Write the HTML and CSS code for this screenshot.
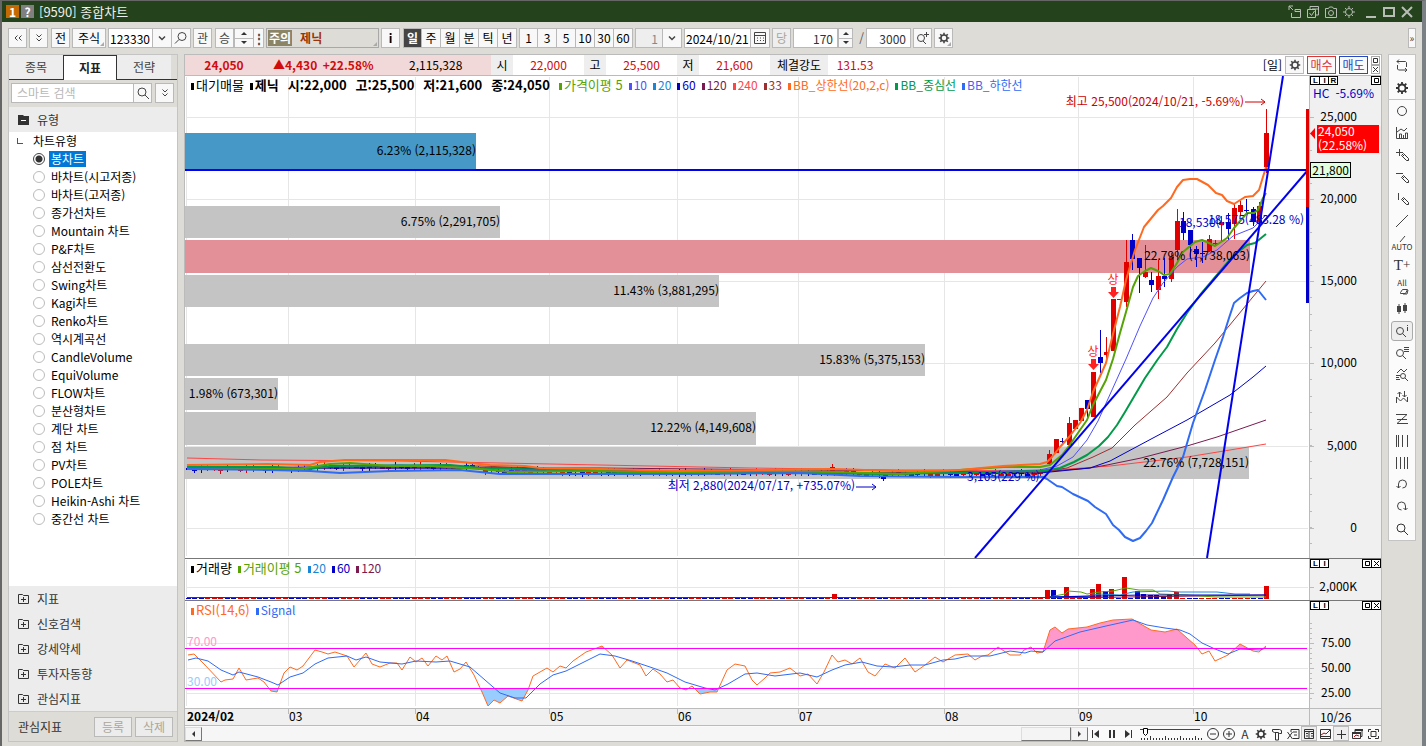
FILE: index.html
```html
<!DOCTYPE html>
<html lang="ko">

<head>
    <meta charset="UTF-8">
    <meta name="viewport" content="width=device-width, initial-scale=1.0">
    <title>[9590] 종합차트</title>
    <link rel="stylesheet" href="styles.css">
</head>

<body>
    <!-- 공용 아이콘 -->
    <svg class="defs" width="0" height="0">
        <symbol id="gear" viewBox="0 0 16 16">
            <circle cx="8" cy="8" r="3.5" fill="none" stroke="currentColor" stroke-width="1.8" />
            <path d="M8 2v2.500M8 11.500V14M2 8h2.500M11.500 8H14M3.700 3.700l1.800 1.800M10.500 10.500l1.800 1.800M3.700 12.300l1.800-1.800M10.500 5.500l1.800-1.800" fill="none" stroke="currentColor" stroke-width="1.8" />
        </symbol>
        <symbol id="search" viewBox="0 0 16 16">
            <circle cx="7" cy="7" r="4" fill="none" stroke="currentColor" />
            <path d="M10 10l4 4" stroke="currentColor" />
        </symbol>
        <symbol id="lens" viewBox="0 0 16 16">
            <circle cx="9" cy="6.500" r="4" fill="none" stroke="currentColor" />
            <path d="M6 9.500L2 13.500" stroke="currentColor" />
        </symbol>
        <symbol id="dbl-down" viewBox="0 0 16 16">
            <path d="M5.500 4.500L8 7l2.500-2.500M5.500 8.500L8 11l2.500-2.500" fill="none" stroke="currentColor" />
        </symbol>
        <symbol id="dbl-left" viewBox="0 0 16 16">
            <path d="M7.500 5.500L5 8l2.500 2.500M11.500 5.500L9 8l2.500 2.500" fill="none" stroke="currentColor" />
        </symbol>
        <symbol id="down" viewBox="0 0 16 16">
            <path d="M5 6.500l3 3 3-3" fill="none" stroke="currentColor" stroke-width="1.500" />
        </symbol>
        <symbol id="pen" viewBox="0 0 16 16">
            <path d="M7.500 8.500l2-2 5 5v2h-2zM8.500 9.500l2-2" fill="none" stroke="currentColor" />
        </symbol>
        <symbol id="plus-box" viewBox="0 0 12 12">
            <path d="M.5 1.500h4l1 1h5v8H.5zM3 6.500h5M5.500 4v5" fill="none" stroke="currentColor" />
        </symbol>
        <symbol id="box" viewBox="0 0 7 7">
            <path d="M1.500 1.500h4v4h-4z" fill="none" stroke="currentColor" />
        </symbol>
        <symbol id="cross" viewBox="0 0 7 7">
            <path d="M1 1l5 5M6 1L1 6" fill="none" stroke="currentColor" />
        </symbol>
    </svg>

    <div class="window">
        <header class="title-bar">
            <span class="badge orange">1</span>
            <span class="badge gray">?</span>
            <h1>[9590] 종합차트</h1>
            <div class="window-buttons">
                <button aria-label="이동"><svg width="14" height="14" viewBox="0 0 14 14"><path d="M1 5V1h4M1 1l4 4M3.500 8v4.500h9v-8H7M7 4.500v2h5" /></svg></button>
                <button aria-label="복사"><svg width="14" height="14" viewBox="0 0 14 14"><path d="M1.500 4.500h8v8h-8zM4 4V1.500h8.500V10H10M3.500 8l2 2.500L8.500 6M6 4h6" /></svg></button>
                <button aria-label="캡처"><svg width="14" height="14" viewBox="0 0 14 14"><path d="M1.500 3.500h3l1-1.500h3l1 1.500h3v9h-11z" /><circle cx="7" cy="8" r="2.500" /></svg></button>
                <button aria-label="설정"><svg width="14" height="14" viewBox="0 0 14 14"><circle cx="7" cy="7" r="3.500" /><path d="M7 1v2.500M7 10.500V13M1 7h2.500M10.500 7H13M3 3l1.500 1.500M9.500 9.500L11 11M3 11l1.500-1.500M9.500 4.500L11 3" /></svg></button>
                <button class="wide" aria-label="최소화"><svg width="14" height="14" viewBox="0 0 14 14"><path class="thick" d="M2 12h10" /></svg></button>
                <button class="wide" aria-label="최대화"><svg width="14" height="14" viewBox="0 0 14 14"><path class="thick" d="M2 3h10v8H2z" /></svg></button>
                <button class="wide" aria-label="닫기"><svg width="14" height="14" viewBox="0 0 14 14"><path class="thick" d="M2 2l10 10M12 2L2 12" /></svg></button>
            </div>
        </header>

        <div class="toolbar">
            <button class="tb"><svg width="16" height="16"><use href="#dbl-left" /></svg></button>
            <button class="tb"><svg width="16" height="16"><use href="#dbl-down" /></svg></button>
            <button class="tb dark space-s">전</button>
            <button class="tb dark stock corner">주식</button>
            <div class="group">
                <input class="code" type="text" value="123330" aria-label="종목코드">
                <button class="tb"><svg width="16" height="16"><use href="#down" /></svg></button>
                <button class="tb"><svg width="16" height="16"><use href="#lens" /></svg></button>
            </div>
            <button class="tb">관</button>
            <div class="group space-s">
                <button class="tb">승</button>
                <div class="spin"><button aria-label="위"></button><button aria-label="아래"></button></div>
                <button class="tb dots">⋮</button>
            </div>
            <div class="stock-name corner"><span>주의</span><b>제닉</b></div>
            <button class="tb dark info"><b>i</b></button>
            <div class="group dark space-s">
                <button class="tb on">일</button><button class="tb">주</button><button class="tb">월</button><button class="tb">분</button><button class="tb">틱</button><button class="tb">년</button>
            </div>
            <div class="group dark">
                <button class="tb">1</button><button class="tb">3</button><button class="tb">5</button><button class="tb">10</button><button class="tb">30</button><button class="tb">60</button>
            </div>
            <div class="group">
                <input class="count off" type="text" value="1" aria-label="분 단위" disabled>
                <button class="tb"><svg width="16" height="16"><use href="#down" /></svg></button>
            </div>
            <div class="group">
                <input class="date" type="text" value="2024/10/21" aria-label="기준일">
                <button class="tb"><svg width="16" height="16" viewBox="0 0 16 16"><path d="M2.500 2.500h11v11h-11zM3 5.500h10M5 8h1M8 8h1M11 8h1M5 10.500h1M8 10.500h1M11 10.500h1" fill="none" stroke="#444" /></svg></button>
            </div>
            <button class="tb off">당</button>
            <div class="group">
                <input class="count" type="text" value="170" aria-label="표시 개수">
                <div class="spin narrow"><button aria-label="증가"></button><button aria-label="감소"></button></div>
            </div>
            <span class="slash">/</span>
            <input class="count" type="text" value="3000" aria-label="전체 개수">
            <button class="tb"><svg width="16" height="16" viewBox="0 0 16 16"><circle cx="6" cy="8" r="3.500" fill="none" stroke="#444" /><path d="M8 11l3 3M9 4.500h5M11.500 2v5" stroke="#444" /></svg></button>
            <button class="tb corner"><svg width="14" height="14"><use href="#gear" /></svg></button>
            <button class="tb more">»</button>
        </div>

        <main class="content">
            <aside class="sidebar">
                <nav class="tabs">
                    <button>종목</button><button class="active">지표</button><button>전략</button>
                </nav>
                <div class="search-row">
                    <input type="text" placeholder="스마트 검색" aria-label="스마트 검색">
                    <button class="tb"><svg width="16" height="16"><use href="#search" /></svg></button>
                    <button class="tb last"><svg width="16" height="16"><use href="#dbl-down" /></svg></button>
                </div>
                <div class="lists">
                    <h2 class="fold"><svg width="12" height="12" viewBox="0 0 12 12"><path d="M0 1h5l1 1h5v9H0z" fill="#333" /><path d="M3 6.500h5" stroke="#fff" /></svg>유형</h2>
                    <div class="tree">
                        <p>차트유형</p>
                        <label><input type="radio" name="type" checked><span>봉차트</span></label>
                        <label><input type="radio" name="type"><span>바차트(시고저종)</span></label>
                        <label><input type="radio" name="type"><span>바차트(고저종)</span></label>
                        <label><input type="radio" name="type"><span>종가선차트</span></label>
                        <label><input type="radio" name="type"><span>Mountain 차트</span></label>
                        <label><input type="radio" name="type"><span>P&amp;F차트</span></label>
                        <label><input type="radio" name="type"><span>삼선전환도</span></label>
                        <label><input type="radio" name="type"><span>Swing차트</span></label>
                        <label><input type="radio" name="type"><span>Kagi차트</span></label>
                        <label><input type="radio" name="type"><span>Renko차트</span></label>
                        <label><input type="radio" name="type"><span>역시계곡선</span></label>
                        <label><input type="radio" name="type"><span>CandleVolume</span></label>
                        <label><input type="radio" name="type"><span>EquiVolume</span></label>
                        <label><input type="radio" name="type"><span>FLOW차트</span></label>
                        <label><input type="radio" name="type"><span>분산형차트</span></label>
                        <label><input type="radio" name="type"><span>계단 차트</span></label>
                        <label><input type="radio" name="type"><span>점 차트</span></label>
                        <label><input type="radio" name="type"><span>PV차트</span></label>
                        <label><input type="radio" name="type"><span>POLE차트</span></label>
                        <label><input type="radio" name="type"><span>Heikin-Ashi 차트</span></label>
                        <label><input type="radio" name="type"><span>중간선 차트</span></label>
                    </div>
                    <h2 class="fold"><svg width="12" height="12"><use href="#plus-box" /></svg>지표</h2>
                    <h2 class="fold"><svg width="12" height="12"><use href="#plus-box" /></svg>신호검색</h2>
                    <h2 class="fold"><svg width="12" height="12"><use href="#plus-box" /></svg>강세약세</h2>
                    <h2 class="fold"><svg width="12" height="12"><use href="#plus-box" /></svg>투자자동향</h2>
                    <h2 class="fold"><svg width="12" height="12"><use href="#plus-box" /></svg>관심지표</h2>
                    <div class="fav"><span>관심지표</span><button disabled>등록</button><button disabled>삭제</button></div>
                </div>
            </aside>

            <section class="chart">
                <div class="quote">
                    <div class="now"><b class="price">24,050</b><b class="diff">▲4,430&nbsp; +22.58%</b><span>2,115,328</span></div>
                    <span class="name">시</span><span class="val">22,000</span>
                    <span class="name">고</span><span class="val">25,500</span>
                    <span class="name">저</span><span class="val">21,600</span>
                    <span class="name long">체결강도</span><span class="val">131.53</span>
                    <div class="quote-right">
                        <span>[일]</span>
                        <button class="tb"><svg width="14" height="14"><use href="#gear" /></svg></button>
                        <button class="order buy">매수</button>
                        <button class="order sell">매도</button>
                        <div class="mini">
                            <button aria-label="확장"><svg width="7" height="7"><use href="#box" /></svg></button>
                            <button aria-label="닫기"><svg width="7" height="7"><use href="#cross" /></svg></button>
                        </div>
                    </div>
                </div>

                <div class="pane">
                    <div class="plot">
                        <svg id="price" width="100%" height="482"></svg>
                        <div class="legend">
                            <span class="k ko">대기매물</span><b class="k">제닉</b><b>시:22,000</b><b>고:25,500</b><b>저:21,600</b><b>종:24,050</b>
                            <span class="k ko c5">가격이평 5</span><span class="k c10">10</span><span class="k c20">20</span><span class="k c60">60</span><span class="k c120">120</span><span class="k c240">240</span><span class="k c33">33</span>
                            <span class="k up">BB_상한선(20,2,c)</span><span class="k mid">BB_중심선</span><span class="k low">BB_하한선</span>
                        </div>
                    </div>
                    <div class="axis">
                        <svg id="price-axis" width="100%" height="482"></svg>
                        <div class="pane-buttons">
                            <button>L</button><button>I</button><button>R</button>
                            <button class="right" aria-label="확장"><svg width="7" height="7"><use href="#box" /></svg></button>
                        </div>
                    </div>
                </div>

                <div class="pane">
                    <div class="plot">
                        <svg id="volume" width="100%" height="41"></svg>
                        <div class="legend"><span class="k ko">거래량</span><span class="k ko c5">거래이평 5</span><span class="k c20">20</span><span class="k c60">60</span><span class="k c120">120</span></div>
                    </div>
                    <div class="axis">
                        <svg id="volume-axis" width="100%" height="41"></svg>
                        <div class="pane-buttons">
                            <button>L</button><button>I</button>
                            <button class="right" aria-label="확장"><svg width="7" height="7"><use href="#box" /></svg></button>
                            <button aria-label="닫기"><svg width="7" height="7"><use href="#cross" /></svg></button>
                        </div>
                    </div>
                </div>

                <div class="pane last">
                    <div class="plot">
                        <svg id="rsi" width="100%" height="107"></svg>
                        <div class="legend"><span class="k ko up">RSI(14,6)</span><span class="k low">Signal</span></div>
                    </div>
                    <div class="axis">
                        <svg id="rsi-axis" width="100%" height="107"></svg>
                        <div class="pane-buttons">
                            <button>L</button><button>I</button>
                            <button class="right" aria-label="확장"><svg width="7" height="7"><use href="#box" /></svg></button>
                            <button aria-label="닫기"><svg width="7" height="7"><use href="#cross" /></svg></button>
                        </div>
                    </div>
                </div>

                <div class="dates">
                    <svg id="months" width="100%" height="16"></svg>
                    <span>10/26</span>
                </div>

                <div class="bottom">
                    <button class="scroll" aria-label="왼쪽"><svg width="7" height="8" viewBox="0 0 7 8"><path class="fill" d="M5 1v6L2 4z" /></svg></button>
                    <div class="track"><div class="thumb"></div></div>
                    <button class="scroll" aria-label="오른쪽"><svg width="7" height="8" viewBox="0 0 7 8"><path class="fill" d="M2 1v6l3-3z" /></svg></button>
                    <div class="play">
                        <button aria-label="처음"><svg width="16" height="14" viewBox="0 0 16 14"><path d="M4.500 3v8" /><path class="fill" d="M11 3v8L6 7z" /></svg></button>
                        <button aria-label="일시정지"><svg width="16" height="14" viewBox="0 0 16 14"><path class="bold" d="M6 3v8M10 3v8" /></svg></button>
                        <button aria-label="마지막"><svg width="16" height="14" viewBox="0 0 16 14"><path d="M11.500 3v8" /><path class="fill" d="M5 3v8l5-4z" /></svg></button>
                    </div>
                    <svg id="speed" width="64" height="14"></svg>
                    <div class="tools">
                        <button aria-label="축소"><svg width="16" height="14" viewBox="0 0 16 14"><circle cx="8" cy="7" r="5.500" /><path d="M5 7h6" /></svg></button>
                        <button aria-label="확대"><svg width="16" height="14" viewBox="0 0 16 14"><circle cx="8" cy="7" r="5.500" /><path d="M5 7h6M8 4v6" /></svg></button>
                        <button>A</button>
                        <button aria-label="설정"><svg width="14" height="14"><use href="#gear" /></svg></button>
                        <button aria-label="도구"><svg width="16" height="14" viewBox="0 0 16 14"><path d="M3.500 2.500h7l2 1v3h-2l-1-1h-4l-2-1zM6.500 6v7h3V6" /></svg></button>
                        <button aria-label="엑셀"><svg width="16" height="14" viewBox="0 0 16 14"><path d="M6 5V2.500h8v9H8M8 5h4M9 8h3M2.500 5l5 7M7.500 5l-5 7" /></svg></button>
                        <button class="on" aria-label="정보창"><svg width="16" height="14" viewBox="0 0 16 14"><path d="M3.500 2.500h9v9h-9zM4 4.500h8M8 5v6M5 6.500h2M5 9h2M10 6.500h2M10 9h2" /></svg></button>
                        <button aria-label="차트"><svg width="16" height="14" viewBox="0 0 16 14"><path d="M3.500 2.500h10v9h-10zM4 9.500h9" /><path d="M4 8l3-2 2 1 4-4" stroke="#c00" /></svg></button>
                        <button class="on" aria-label="십자선"><svg width="16" height="14" viewBox="0 0 16 14"><path d="M4 7.500h9M8.500 3v9" /></svg></button>
                        <button aria-label="창 복사"><svg width="16" height="14" viewBox="0 0 16 14"><path d="M3.500 5.500h8v6h-8zM6 5V2.500h7v7h-2" /><path class="bold" d="M3 6h9M6 3h8" /><path d="M5 10l2-2 3 1" stroke="#c00" /></svg></button>
                        <button aria-label="전체화면"><svg width="16" height="14" viewBox="0 0 16 14"><path d="M3.500 5V2.500H6M10 2.500h3.500V5M13.500 9v2.500H10M6 11.500H3.500V9M6 4.500h5v5H6z" /></svg></button>
                    </div>
                </div>
            </section>

            <nav class="rail">
                <button aria-label="새로고침"><svg viewBox="0 0 16 16"><path d="M6 3.500h5.500l1 1V9M5 1.500l-2 2 2 2M3 3.500h3M3.500 7v4l1 1H12M11 10l2 2-2 2" /></svg></button>
                <button aria-label="설정"><svg width="16" height="16"><use href="#gear" /></svg></button>
                <hr>
                <button aria-label="원"><svg viewBox="0 0 16 16"><circle cx="8" cy="8" r="4.500" /></svg></button>
                <button aria-label="지표"><svg viewBox="0 0 16 16"><path d="M2.500 2v11.500H14M3 7l4-3 3 2 3-3M5.500 13V9h2v4M9.500 13v-3M11.500 13V8h2v5" /></svg></button>
                <button aria-label="추가선"><svg viewBox="0 0 16 16"><path d="M2 5.500h7M5.500 2v7" /><use href="#pen" /></svg></button>
                <button aria-label="수평선"><svg viewBox="0 0 16 16"><path d="M2 4.500h7" /><use href="#pen" /></svg></button>
                <button aria-label="수직선"><svg viewBox="0 0 16 16"><path d="M4.500 2v7" /><use href="#pen" /></svg></button>
                <button aria-label="추세선"><svg viewBox="0 0 16 16"><path d="M2 14L14 2" /></svg></button>
                <button class="auto"><svg viewBox="0 0 16 8"><path d="M6 7l5-6" /></svg>AUTO</button>
                <button class="text">T<sup>+</sup></button>
                <button class="all">All<svg viewBox="0 0 16 8"><path d="M6.500 5.500l2-3h5l-2 4h-5zM9 7h4l1-4" /></svg></button>
                <button aria-label="캔들"><svg viewBox="0 0 16 16"><path class="fill" d="M3 5h4v6H3zM9 4h4v6H9z" /><path d="M5 3v10M11 2v10" /></svg></button>
                <button class="on" aria-label="정보"><svg viewBox="0 0 16 16"><circle cx="6" cy="8" r="3.500" /><path d="M8.500 10.500L12 14M13.500 2v1M13.500 4v4" /></svg></button>
                <button aria-label="목록"><svg viewBox="0 0 16 16"><circle cx="6" cy="8" r="3.500" /><path d="M8.500 10.500L12 14M10 2.500h5M10 4.500h5M10 6.500h5" /></svg></button>
                <button aria-label="분석"><svg viewBox="0 0 16 16"><path d="M3 6l4-4 3 3 3-3M2 8.500h4M2 10.500h3M2 12.500h4M11 11l3 3" /><circle cx="9" cy="9" r="2.500" /></svg></button>
                <button aria-label="신호"><svg viewBox="0 0 16 16"><path d="M2.500 14V8l4 4 3-3 4 4V8M5.500 8V3M3.500 5l2-2 2 2M10.500 2v6M8.500 6l2 2 2-2" /></svg></button>
                <button aria-label="피보나치"><svg viewBox="0 0 16 16"><path d="M2 3.500h11L3 12.500h11M3 8.500h10" /></svg></button>
                <button aria-label="시간대"><svg viewBox="0 0 16 16"><path d="M2.500 2v12M4.500 2v12M8.500 2v12M13.500 2v12" /></svg></button>
                <button aria-label="등간격"><svg viewBox="0 0 16 16"><path d="M2.500 2v12M6.500 2v12M10.500 2v12M13.500 2v12" /></svg></button>
                <button aria-label="실행취소"><svg viewBox="0 0 16 16"><path d="M4.500 11V7a4 4 0 1 1 4 4M2.500 9l2 2 2-2" /></svg></button>
                <button aria-label="다시실행"><svg viewBox="0 0 16 16"><path d="M11.500 11V7a4 4 0 1 0-4 4M9.500 9l2 2 2-2" /></svg></button>
                <button aria-label="돋보기"><svg viewBox="0 0 16 16"><use href="#search" /></svg></button>
            </nav>
        </main>
    </div>

    <script src="chart.js"></script>
</body>

</html>
```

FILE: styles.css
```css
* {
    box-sizing: border-box;
}

body {
    margin: 0;
    background: #dddcd7;
    font-family: "Noto Sans CJK KR", "Liberation Sans", sans-serif;
    font-size: 12px;
    line-height: 16px;
    color: #000;
}

button, input {
    font: inherit;
    color: inherit;
    margin: 0;
    padding: 0;
    border: 0;
    background: none;
}

svg {
    display: block;
    flex: none;
}

h1, h2, p, hr {
    margin: 0;
    font-size: 12px;
    font-weight: normal;
}

.defs {
    position: absolute;
}

.window {
    display: flex;
    flex-direction: column;
    min-height: 100vh;
    border-top: 1px solid #666;
    border-left: 2px solid #666;
    border-right: 4px solid #7b8084;
}

/* 제목 표시줄 */
.title-bar {
    display: flex;
    align-items: center;
    gap: 2px;
    height: 21px;
    padding: 0 8px 0 4px;
    background: #24421b;
    color: #eee;
}

.title-bar h1 {
    padding-left: 3px;
    font-size: 13px;
}

.badge {
    width: 13px;
    height: 13px;
    line-height: 13px;
    text-align: center;
    font-weight: bold;
    color: #fff;
}

.orange {
    background: #c36a05;
}

.gray {
    background: #808080;
}

.window-buttons {
    display: flex;
    gap: 4px;
    margin-left: auto;
}

.window-buttons button:nth-child(5) {
    margin-left: 4px;
}

.window-buttons svg {
    fill: none;
    stroke: #b8bdb6;
}

.window-buttons .thick {
    stroke-width: 2;
}

/* 도구 모음 */
.toolbar {
    display: flex;
    align-items: center;
    gap: 2px;
    height: 32px;
    padding-left: 6px;
}

.tb {
    position: relative;
    display: flex;
    align-items: center;
    justify-content: center;
    flex: none;
    width: 19px;
    height: 20px;
    border: 1px solid #b9b9b9;
    background: #f8f8f8;
    color: #444;
}

.group {
    display: flex;
    height: 20px;
}

.group > * + * {
    border-left: 0;
}

.dark, .dark .tb {
    color: #000;
}

.group .tb.on {
    background: #444;
    color: #fff;
    font-weight: bold;
}

.tb.off {
    color: #aaa79a;
    background: #eee;
}

.space-s {
    margin-left: 1px;
}

.stock {
    width: 34px;
}

.corner {
    position: relative;
}

.corner::after {
    content: "";
    position: absolute;
    right: 1px;
    bottom: 1px;
    border-left: 4px solid transparent;
    border-bottom: 4px solid #aaa;
}

.toolbar input {
    height: 20px;
    border: 1px solid #b9b9b9;
    background: #fff;
}

.toolbar .code {
    width: 45px;
    padding: 0 1px;
}

.toolbar .count {
    width: 45px;
    padding-right: 4px;
    text-align: right;
    color: #333;
}

.toolbar .count.off {
    width: 28px;
    background: #eee;
    color: #888;
}

.toolbar .date {
    width: 67px;
    padding: 0 1px;
}

.spin {
    width: 20px;
    display: flex;
    flex-direction: column;
    border: 1px solid #b9b9b9;
    background: #f8f8f8;
}

.spin.narrow {
    width: 15px;
}

.spin button {
    flex: 1;
    display: flex;
    align-items: center;
    justify-content: center;
}

.spin button + button {
    border-top: 1px solid #b9b9b9;
}

.spin button::before {
    content: "";
    border: 3px solid transparent;
    border-top: 0;
    border-bottom: 3px solid #333;
}

.spin button + button::before {
    border-bottom: 0;
    border-top: 3px solid #333;
}

.dots {
    width: 10px;
    font-weight: bold;
}

.stock-name {
    display: flex;
    align-items: center;
    gap: 8px;
    width: 113px;
    height: 20px;
    padding-left: 1px;
    border: 1px solid #a8a8a8;
}

.stock-name span {
    padding: 0 1px;
    background: #8b8566;
    color: #fff;
    font-weight: bold;
}

.stock-name b {
    color: #9c3206;
}

.slash {
    width: 9px;
    text-align: right;
    color: #555;
}

.more {
    margin-left: auto;
    margin-right: 6px;
    width: 8px;
    font-size: 10px;
}

/* 본문 */
.content {
    flex: 1;
    display: flex;
    align-items: stretch;
    gap: 6px;
    padding: 0 6px 5px 6px;
}

.sidebar {
    flex: none;
    width: 170px;
    display: flex;
    flex-direction: column;
    border: 1px solid #c4c4c4;
}

.tabs {
    display: flex;
    height: 25px;
    border-bottom: 1px solid #333;
}

.tabs button {
    width: 54px;
    height: 24px;
    background: #ededed;
    color: #444;
}

.tabs .active {
    height: 25px;
    border: 1px solid #333;
    border-bottom: 0;
    background: #fff;
    font-weight: bold;
    color: #222;
}

.search-row {
    display: flex;
    padding: 3px 2px 4px;
}

.search-row input {
    flex: 1;
    min-width: 0;
    padding: 0 5px;
    border: 1px solid #b9b9b9;
    border-right: 0;
    background: #fff;
}

.search-row input::placeholder {
    color: #b8b8b8;
}

.search-row .last {
    margin-left: 3px;
    margin-right: 1px;
}

.lists {
    flex: 1;
    display: flex;
    flex-direction: column;
}

.fold {
    display: flex;
    align-items: center;
    gap: 7px;
    height: 25px;
    padding-left: 9px;
    background: #ececec;
    color: #333;
}

.tree {
    flex: 1;
    background: #fff;
}

.tree p, .tree label {
    display: flex;
    align-items: center;
    height: 18px;
}

.tree p {
    padding-left: 24px;
    position: relative;
}

.tree p::before {
    content: "";
    position: absolute;
    left: 8px;
    top: 6px;
    width: 5px;
    height: 5px;
    border-left: 1px solid #555;
    border-bottom: 1px solid #555;
}

.tree label {
    padding-left: 24px;
    gap: 4px;
}

.tree span {
    padding: 0 2px;
}

.tree input {
    appearance: none;
    width: 12px;
    height: 12px;
    border: 1px solid #bbb;
    border-radius: 50%;
    background: #fff;
}

.tree input:checked {
    border-color: #444;
    background: radial-gradient(#333 0 3px, #fff 4px);
}

.tree input:checked + span {
    background: #0078d7;
    color: #fff;
}

.fav {
    display: flex;
    align-items: center;
    gap: 3px;
    height: 30px;
    padding: 0 4px 0 9px;
    border-top: 1px solid #ccc;
    color: #333;
}

.fav span {
    margin-right: auto;
}

.fav button {
    width: 38px;
    height: 20px;
    border: 1px solid #b9b9b9;
    background: #ececec;
    color: #aaa79a;
}

/* 차트 */
.chart {
    flex: 1;
    min-width: 0;
    border: 1px solid #bbb;
    background: #fff;
}

.quote {
    display: flex;
    height: 21px;
    line-height: 20px;
    border-bottom: 1px solid #bbb;
}

.now {
    display: flex;
    width: 306px;
    background: #f2d9d9;
}

.price {
    width: 78px;
    text-align: center;
    color: #d00c0c;
}

.diff {
    width: 140px;
    padding-left: 10px;
    color: #d00c0c;
}

.now span {
    padding-left: 6px;
}

.name {
    width: 22px;
    text-align: center;
    background: #eee;
}

.name.long {
    width: 58px;
}

.val {
    width: 71px;
    text-align: center;
    color: #d00c0c;
}

.name.long + .val {
    width: 54px;
}

.quote-right {
    display: flex;
    align-items: center;
    gap: 3px;
    margin-left: auto;
    padding-right: 1px;
}

.quote-right .tb {
    height: 18px;
}

.order {
    width: 29px;
    height: 18px;
    line-height: 16px;
    border: 1px solid #d33;
    color: #d33;
    background: #fafafa;
}

.sell {
    border-color: #2448c8;
    color: #2448c8;
}

.mini {
    width: 9px;
}

.mini button {
    display: block;
    width: 9px;
    height: 9px;
    border: 1px solid #aaa;
    color: #333;
}

.pane, .dates {
    display: grid;
    grid-template-columns: minmax(0, 1fr) 72px;
    border-bottom: 1px solid #777;
}

.pane.last {
    border-bottom: 0;
}

.plot, .axis {
    position: relative;
}

.axis {
    border-left: 1px solid #bbb;
    background: #f0f0f0;
}

.legend {
    position: absolute;
    top: 1px;
    left: 6px;
    display: flex;
    gap: 6px;
    white-space: nowrap;
}

.legend b, .legend .ko {
    font-size: 13px;
}

.legend b {
    margin-right: 3px;
}

.k::before {
    content: "";
    display: inline-block;
    width: 3px;
    height: 7px;
    margin-right: 2px;
    background: currentColor;
}

.c5 { color: #56a305; }
.c10 { color: #5050ff; }
.c20 { color: #1a86d8; }
.c60 { color: #0000c8; }
.c120 { color: #7a1a50; }
.c240 { color: #ff4545; }
.c33 { color: #9c3030; }
.up { color: #ff6a20; }
.mid { color: #009a48; }
.low { color: #2f6bf5; }

.pane-buttons {
    position: absolute;
    top: 0;
    left: 0;
    right: 0;
    display: flex;
}

.pane-buttons button {
    width: 10px;
    height: 9px;
    margin-right: -1px;
    padding-left: 1px;
    font-family: "Liberation Sans", sans-serif;
    font-size: 8px;
    font-weight: bold;
    line-height: 7px;
    border: 1px solid #000;
    background: #fff;
}

.pane-buttons .right {
    margin-left: auto;
}

.pane-buttons button:last-child {
    margin-right: 0;
}

.dates {
    border-top: 1px solid #bbb;
    border-bottom: 1px solid #bbb;
    background: #f0f0f0;
}

.dates svg {
    overflow: visible;
}

.dates span {
    padding-left: 10px;
    border-left: 1px solid #bbb;
}

svg text {
    font-size: 12px;
}

/* 스크롤과 재생 */
.bottom {
    display: flex;
    align-items: center;
    height: 15px;
    background: #fafafa;
}

.scroll {
    display: flex;
    align-items: center;
    justify-content: center;
    width: 17px;
    height: 14px;
    background: #f4f4f4;
    border: 1px solid #ddd;
    border-right-color: #777;
    border-bottom-color: #777;
}

.track {
    flex: 1;
    height: 14px;
    background: #f6f6f6;
}

.thumb {
    width: 50px;
    height: 14px;
    margin-left: auto;
    background: #f4f4f4;
    border: 1px solid #ddd;
    border-right-color: #777;
    border-bottom-color: #777;
}

.play, .tools {
    display: flex;
}

.play button, .tools button {
    display: flex;
    align-items: center;
    justify-content: center;
    width: 16px;
    height: 15px;
    color: #333;
}

.bottom svg {
    fill: none;
    stroke: #333;
}

.bottom .fill {
    fill: #333;
    stroke: none;
}

.bottom .bold {
    stroke-width: 2;
}

.bottom #speed {
    stroke: none;
}

.play {
    margin-right: 4px;
}

.tools {
    margin-left: 1px;
}

.tools .on {
    border: 1px solid #bbb;
    background: #eee;
}

/* 오른쪽 그리기 도구 */
.rail {
    flex: none;
    align-self: flex-start;
    width: 28px;
    border: 1px solid #c4c4c4;
    background: #fbfbfb;
}

.rail button {
    display: flex;
    align-items: center;
    justify-content: center;
    width: 22px;
    height: 22px;
    margin: 0 auto;
    color: #333;
}

.rail hr {
    height: 1px;
    border: 0;
    background: #c4c4c4;
}

.rail svg {
    width: 16px;
    height: 16px;
    fill: none;
    stroke: #444;
}

.rail .fill {
    fill: #444;
    stroke: none;
}

.rail .on {
    height: 20px;
    margin: 1px auto;
    border: 1px solid #aaa;
    border-radius: 3px;
    background: #eee;
}

.rail .auto, .rail .all {
    flex-direction: column;
    font-size: 8px;
    line-height: 8px;
}

.rail .auto svg, .rail .all svg {
    height: 8px;
}

.rail .text {
    font-family: "Liberation Serif", serif;
    font-size: 15px;
}

.rail sup {
    font-size: 13px;
    line-height: 8px;
}
```

FILE: chart.js
```js
const NS = 'http://www.w3.org/2000/svg';
const MONTHS = [[288, '03'], [415, '04'], [549, '05'], [677, '06'], [798, '07'], [944, '08'], [1078, '09'], [1193, '10']];
const RED = '#e00000';
const BLUE = '#0000c8';

// 각 영역을 같은 좌표계로 그리기 위한 그룹
function layer(id, x, y) {
    const g = document.createElementNS(NS, 'g');
    g.setAttribute('transform', `translate(${-x} ${-y})`);
    document.getElementById(id).appendChild(g);
    return g;
}

function add(g, tag, attrs, text) {
    const el = document.createElementNS(NS, tag);
    for (const k in attrs) el.setAttribute(k, attrs[k]);
    if (text) el.textContent = text;
    g.appendChild(el);
    return el;
}

function rect(g, x0, y0, x1, y1, fill) {
    return add(g, 'rect', { x: x0, y: y0, width: x1 - x0, height: Math.max(1, y1 - y0), fill, 'shape-rendering': 'crispEdges' });
}

function line(g, points, stroke, width = 1) {
    return add(g, 'polyline', { points, fill: 'none', stroke, 'stroke-width': width, 'stroke-linejoin': 'round' });
}

function label(g, x, y, text, fill = '#000', anchor = 'start') {
    return add(g, 'text', { x, y: y + 5, fill, 'text-anchor': anchor }, text);
}

function gridX(g, y0, y1) {
    rect(g, 186, y0, 187, y1, '#e6e6e6');
    MONTHS.forEach(([x]) => rect(g, x, y0, x + 1, y1, '#e6e6e6'));
}

/* ---------- 가격 차트 ---------- */
const p = layer('price', 185, 76);
gridX(p, 77, 556);
[117, 199, 281, 363, 446, 528].forEach(y => rect(p, 186, y, 1308, y + 1, '#e6e6e6'));

const profile = [
    [133, 170, 476, '#4698c6', '6.23% (2,115,328)'],
    [206, 238, 500, '#c4c4c4', '6.75% (2,291,705)'],
    [240, 273, 1250, '#e49099', '22.79% (7,738,063)'],
    [275, 307, 719, '#c4c4c4', '11.43% (3,881,295)'],
    [344, 376, 925, '#c4c4c4', '15.83% (5,375,153)'],
    [378, 410, 278, '#c4c4c4', '1.98% (673,301)'],
    [412, 445, 756, '#c4c4c4', '12.22% (4,149,608)'],
    [447, 479, 1249, '#c4c4c4', '22.76% (7,728,151)']
];
profile.forEach(([y0, y1, x, c]) => rect(p, 185, y0, x, y1, c));

function candle(x, top, bottom, high, low, color) {
    rect(p, x, high, x + 1, low, color);
    rect(p, x - 2, top, x + 3, bottom, color);
}

// 횡보 구간
for (let i = 0; i < 133; i++) {
    const x = Math.round(188 + i * 6.455);
    const base = x < 310 ? 468 : x < 480 ? 466 : x < 560 ? 470 : x < 860 ? 472 : 473;
    const y = Math.round(base + Math.sin(i * 1.7));
    const h = Math.round(Math.abs(Math.sin(i * 2.3)) * 3);
    candle(x, y, y + 2, y - h, y + 2 + h, Math.sin(i * 5.1) > 0 ? RED : BLUE);
}
candle(832, 467, 472, 464, 474, RED);
candle(883, 477, 479, 475, 481, BLUE);

// [x, 몸통 위, 몸통 아래, 고가, 저가, 양봉]
[
    [1049, 454, 464, 450, 466, 1], [1056, 439, 453, 439, 453, 1], [1062, 441, 442, 438, 445, 0],
    [1069, 423, 445, 417, 446, 1], [1075, 420, 429, 420, 429, 1], [1081, 408, 421, 408, 421, 1],
    [1087, 400, 409, 400, 417, 0], [1093, 372, 417, 372, 417, 1], [1100, 357, 363, 330, 373, 0],
    [1106, 352, 355, 337, 363, 1], [1113, 299, 351, 299, 351, 1], [1119, 299, 300, 299, 300, 1],
    [1126, 262, 302, 240, 307, 1], [1132, 240, 259, 234, 270, 0], [1139, 258, 268, 258, 293, 0],
    [1145, 272, 277, 245, 278, 1], [1151, 280, 285, 272, 292, 0], [1158, 276, 290, 260, 299, 1],
    [1164, 276, 279, 258, 287, 0], [1171, 257, 279, 253, 282, 1], [1177, 221, 250, 209, 261, 1],
    [1183, 221, 233, 212, 240, 0], [1190, 230, 245, 230, 259, 0], [1196, 249, 254, 246, 267, 0],
    [1202, 253, 254, 242, 263, 0], [1209, 239, 251, 235, 252, 1], [1215, 243, 244, 240, 246, 1],
    [1221, 222, 225, 216, 241, 1], [1228, 222, 229, 213, 240, 0], [1234, 208, 224, 204, 239, 1],
    [1240, 205, 212, 201, 216, 1], [1246, 210, 211, 199, 215, 0], [1253, 209, 222, 207, 226, 0],
    [1259, 206, 223, 202, 224, 1], [1266, 133, 167, 109, 173, 1]
].forEach(([x, t, b, h, l, up]) => candle(x, t, b, h, l, up ? RED : BLUE));

line(p, '187,458 262,460 400,461 500,463 600,465 750,468 900,470 1040,471 1110,466 1187,457 1230,450 1266,444', '#ff4545');
line(p, '187,468 400,468 600,468 800,470 1040,472 1090,468 1107,465 1141,458 1187,446 1217,437 1266,420', '#7a1a50');
line(p, '187,469 320,468 500,468 700,472 900,473 1040,473 1090,468 1110,461 1153,438 1187,420 1230,395 1253,377 1266,366', '#0000c8');
line(p, '187,468 320,467 480,466 620,471 900,473 1040,472 1067,468 1093,457 1112,448 1135,425 1167,397 1187,373 1215,343 1266,281', '#9c3030');
line(p, '187,469 320,467 400,465 500,470 700,473 900,474 1040,470 1057,466 1073,457 1087,440 1098,421 1112,390 1126,359 1140,326 1153,298 1163,283 1177,267 1187,259 1203,257 1217,250 1233,236 1253,228 1266,215', '#5050ff');
line(p, '187,467 275,467 310,469 330,466 450,465 480,468 560,470 620,472 760,472 880,474 960,473 1040,471 1060,468 1074,462 1087,455 1099,446 1108,437 1117,425 1125,412 1145,378 1158,359 1167,347 1177,329 1187,313 1200,295 1233,256 1247,245 1255,243 1266,234', '#009a48', 2);
line(p, '187,469 300,469 330,464 350,463 390,466 430,466 480,469 510,472 600,471 700,473 760,471 840,472 900,474 960,470 1003,467 1040,467 1050,465 1062,455 1069,446 1080,430 1087,420 1093,405 1106,380 1113,359 1120,333 1126,312 1133,287 1138,276 1145,271 1151,268 1158,271 1164,275 1170,274 1177,263 1183,252 1195,242 1202,240 1209,243 1215,246 1227,238 1234,228 1247,213 1254,213 1258,210 1263,198 1266,193', '#56a305', 2);
line(p, '187,465 267,464 310,465 320,462 345,460 445,460 470,463 490,465 525,466 540,468 600,469 680,471 760,470 830,469 900,471 960,470 1003,466 1021,465 1040,464 1047,462 1052,457 1060,447 1069,437 1080,423 1087,410 1093,392 1106,363 1112,338 1120,307 1126,280 1135,250 1144,227 1158,210 1163,206 1171,198 1177,187 1183,180 1190,179 1197,179 1208,185 1216,193 1222,195 1227,201 1234,204 1245,197 1253,196 1259,190 1266,167', '#ff6a20', 2);
line(p, '187,469 270,470 310,471 340,473 390,471 460,470 500,474 570,474 700,474 800,473 860,476 960,477 1043,477 1047,479 1057,486 1062,487 1073,494 1088,501 1095,507 1106,514 1113,525 1119,530 1125,537 1129,539 1133,541 1140,538 1146,531 1152,523 1163,500 1173,477 1183,457 1193,423 1205,390 1215,360 1223,337 1229,318 1234,303 1240,298 1247,293 1253,291 1258,290 1266,300', '#2f6bf5', 2);

// 추세선
rect(p, 185, 169, 1308, 171, '#0000f0');
line(p, '975,558 1308,170', '#0000f0', 2);
line(p, '1207,558 1283,76', '#0000f0', 2);
rect(p, 1306, 109, 1309, 207, RED);
rect(p, 1306, 207, 1309, 303, BLUE);

const labelY = [150, 221, 255, 290, 359, 393, 427, 462];
profile.forEach(([, , x, , t], i) => label(p, x, labelY[i], t, '#000', 'end'));
label(p, 1244, 101, '최고 25,500(2024/10/21, -5.69%)', '#d00000', 'end');
line(p, '1245,102 1265,102 1261,99', '#d00000');
line(p, '1265,102 1261,105', '#d00000');
label(p, 855, 485, '최저 2,880(2024/07/17, +735.07%)', '#0000c8', 'end');
line(p, '856,487 876,487 872,484', '#0000c8');
line(p, '876,487 872,490', '#0000c8');
label(p, 967, 476, '3,105(229 %)', '#0000c8');
label(p, 1179, 222, '18,530(', '#0000c8');
label(p, 1304, 219, '18,575(483.28 %)', '#0000c8', 'end');
[[1113, 279], [1093, 351]].forEach(([x, y]) => {
    label(p, x, y, '상', '#ff2020', 'middle');
    add(p, 'path', { d: `M${x - 2} ${y + 8}h5v5h3l-5.500 6-5.500-6h3z`, fill: '#ff2020' });
});

/* ---------- 가격 축 ---------- */
const pa = layer('price-axis', 1310, 76);
label(pa, 1313, 93, 'HC', '#0000c8');
label(pa, 1374, 93, '-5.69%', '#0000c8', 'end');
[[117, '25,000'], [199, '20,000'], [281, '15,000'], [363, '10,000'], [446, '5,000'], [528, '0']].forEach(([y, t]) => {
    rect(pa, 1310, y, 1314, y + 1, '#bbb');
    label(pa, 1357, y - 1, t, '#000', 'end');
});
for (let y = 117; y < 550; y += 16.4) rect(pa, 1310, Math.round(y), 1312, Math.round(y) + 1, '#bbb');
add(pa, 'path', { d: 'M1310 133.500l5-5.500v11z', fill: '#f00' });
rect(pa, 1317, 125, 1379, 153, '#f00');
label(pa, 1318, 131, '24,050', '#fff');
label(pa, 1318, 145, '(22.58%)', '#fff');
add(pa, 'rect', { x: 1310.5, y: 162.5, width: 40, height: 15, fill: '#dfffdf', stroke: '#000' });
label(pa, 1349, 170, '21,800', '#000', 'end');

/* ---------- 거래량 ---------- */
const v = layer('volume', 185, 559);
gridX(v, 560, 600);
rect(v, 186, 587, 1308, 588, '#e6e6e6');
const tall = {
    833: [594, 1], 839: [597, 0], 934: [596, 1], 1049: [590, 1], 1055: [590, 0], 1062: [595, 0], 1068: [587, 1], 1094: [589, 1],
    1100: [584, 1], 1107: [591, 0], 1113: [589, 1], 1126: [577, 1], 1133: [591, 0], 1139: [591, 0], 1145: [594, 0],
    1152: [595, 0], 1158: [595, 0], 1165: [596, 0], 1171: [594, 1], 1178: [592, 1], 1266: [586, 1]
};
for (let i = 0; i < 168; i++) {
    const x = Math.round(188 + i * 6.455);
    const key = Object.keys(tall).find(k => Math.abs(k - x) < 3);
    const [top, up] = key ? tall[key] : [598, Math.sin(i * 5.1) > 0];
    rect(v, x - 2, top, x + 3, 599, up ? RED : BLUE);
}
line(v, '187,597.500 1045,597.500 1093,597.500 1266,595', '#7a1a50');
line(v, '1049,597 1065,594 1068,591 1081,592 1087,594 1100,592 1113,591 1126,588 1139,590 1153,590 1160,594 1187,595 1215,597 1266,597', '#56a305');
line(v, '1049,597 1087,596 1100,594 1120,595 1133,592 1167,591 1180,592 1217,592 1235,594 1250,594', '#1a86d8');
line(v, '1049,597 1100,596 1140,595 1266,595', '#0000c8');

const va = layer('volume-axis', 1310, 559);
rect(va, 1310, 587, 1314, 588, '#bbb');
label(va, 1357, 586, '2,000K', '#000', 'end');

/* ---------- RSI ---------- */
const r = layer('rsi', 185, 601);
gridX(r, 602, 706);
[643, 668, 693].forEach(y => rect(r, 186, y, 1308, y + 1, '#e6e6e6'));
label(r, 187, 641, '70.00', '#ff9acb');
label(r, 187, 681, '30.00', '#99ccff');

const rsi = '188,655 194,654 204,664 221,682 225,680 233,679 239,668 246,680 258,678 264,682 271,691 277,692 284,673 290,667 297,670 303,666 315,650 322,652 328,654 335,652 347,656 354,667 366,653 372,664 380,667 390,663 397,663 402,670 410,657 416,662 422,658 428,666 436,656 442,660 447,656 454,672 460,669 466,662 474,675 482,692 488,706 494,700 500,703 508,696 522,701 528,690 533,676 540,672 547,668 553,672 560,666 566,668 573,661 586,652 602,646 612,655 620,668 627,660 640,665 646,676 653,669 660,674 667,682 673,680 680,688 686,690 692,686 700,694 710,692 717,692 727,670 735,664 745,666 752,680 757,685 765,678 770,673 780,672 790,668 800,676 808,674 817,684 824,672 832,655 838,662 845,660 852,664 860,658 868,672 875,676 885,664 895,668 905,658 915,672 925,665 935,657 943,662 955,655 968,654 975,660 982,656 988,655 998,647 1010,655 1020,655 1024,650 1031,647 1037,653 1043,652 1050,630 1055,627 1062,633 1068,629 1087,627 1100,623 1113,620 1132,619 1151,630 1165,632 1177,629 1187,638 1195,645 1202,654 1209,651 1215,661 1228,655 1240,644 1253,651 1259,652 1266,646';
const pts = rsi.split(' ').map(s => s.split(',').map(Number));

// 기준선 밖의 영역 채우기
function band(limit, above, fill) {
    const out = [];
    pts.forEach(([x, y], i) => {
        if (i) {
            const [px, py] = pts[i - 1];
            if ((py - limit) * (y - limit) < 0) out.push([px + (x - px) * (limit - py) / (y - py), limit]);
        }
        out.push([x, above ? Math.min(y, limit) : Math.max(y, limit)]);
    });
    add(r, 'polygon', { points: `188,${limit} ${out.join(' ')} 1266,${limit}`, fill });
}
band(648, true, '#ff99cc');
band(688, false, '#99ccff');
line(r, rsi, '#ff6a20');
line(r, '188,660 196,658 208,661 221,670 233,675 239,672 258,677 271,682 278,685 290,677 303,673 315,664 328,658 347,656 356,660 366,657 380,662 402,664 416,661 436,662 450,661 470,667 485,680 500,693 515,698 526,698 540,684 553,675 566,671 586,661 600,654 615,656 632,661 650,667 667,673 685,682 705,688 715,690 728,684 745,674 757,673 775,676 800,673 817,677 832,670 845,665 862,662 877,666 893,667 910,665 925,665 943,660 955,659 968,656 990,656 1010,651 1025,653 1031,651 1043,652 1055,641 1080,632 1106,626 1133,620 1147,625 1165,628 1180,630 1190,634 1202,643 1215,649 1228,654 1240,649 1260,650 1266,648', '#2f6bf5');
rect(r, 185, 648, 1307, 649, '#f0f');
rect(r, 185, 688, 1307, 689, '#f0f');

const ra = layer('rsi-axis', 1310, 601);
[[643, '75.00'], [668, '50.00'], [693, '25.00']].forEach(([y, t]) => {
    rect(ra, 1310, y, 1314, y + 1, '#bbb');
    label(ra, 1351, y - 1, t, '#000', 'end');
});
for (let y = 623; y < 700; y += 5) rect(ra, 1310, y, 1312, y + 1, '#bbb');

/* ---------- 날짜 축 ---------- */
const m = layer('months', 185, 709);
label(m, 187, 716, '2024/02').setAttribute('font-weight', 'bold');
MONTHS.forEach(([x, t]) => {
    rect(m, x, 709, x + 1, 714, '#bbb');
    label(m, x + 1, 716, t);
});

/* ---------- 재생 속도 ---------- */
const s = layer('speed', 0, 0);
rect(s, 0, 2, 60, 3, '#444');
for (let x = 1; x < 62; x += 3) rect(s, x, x % 5 ? 11 : 9, x + 1, 13, '#333');
add(s, 'path', { d: 'M3.500 1.500h4v5l-2 2-2-2z', fill: '#fff', stroke: '#000' });
```
